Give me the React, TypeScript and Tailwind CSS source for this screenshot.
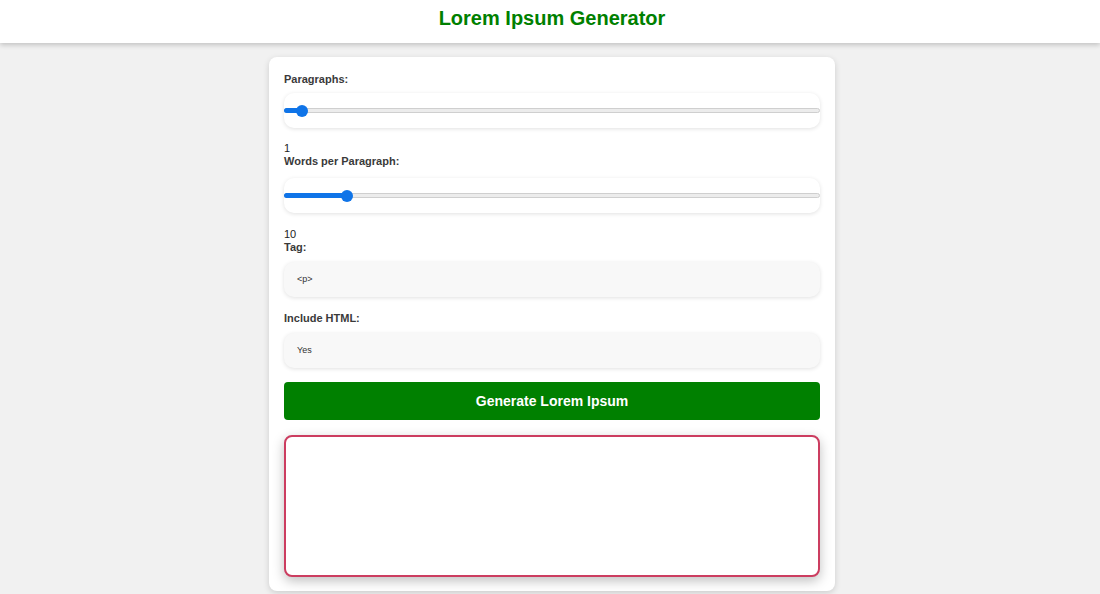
import { useState } from "react";

function Slider({ value, min, max }: { value: number; min: number; max: number }) {
  const pct = ((value - min) / (max - min)) * 100;
  return (
    <div className="relative flex h-[35px] w-full items-center rounded-[10px] bg-white shadow-[0_1px_4px_rgba(0,0,0,0.12)]">
      <div className="relative h-[5px] w-full">
        <div className="absolute inset-x-0 top-0 h-[5px] rounded-full border border-[#cfcfcf] bg-[#ececec]" />
        <div className="absolute left-0 top-0 h-[5px] rounded-full bg-[#0f74e8]" style={{ width: `${pct}%` }} />
        <div
          className="absolute top-1/2 h-[12px] w-[12px] -translate-x-1/2 -translate-y-1/2 rounded-full bg-[#0f74e8]"
          style={{ left: `${pct}%` }}
        />
      </div>
    </div>
  );
}

function Label({ children }: { children: string }) {
  return <div className="text-[11px] font-bold leading-[14px] text-[#3a3a3a]">{children}</div>;
}

function SelectBox({ value }: { value: string }) {
  return (
    <div className="flex h-[35px] w-full items-center rounded-[10px] bg-[#f8f8f8] px-[13px] text-[9px] text-[#333] shadow-[0_1px_4px_rgba(0,0,0,0.12)]">
      {value}
    </div>
  );
}

export default function App() {
  const [paragraphs] = useState(1);
  const [words] = useState(10);

  return (
    <div className="min-h-[594px] bg-[#f1f1f1] font-['Liberation_Sans',Arial,sans-serif]">
      <header className="h-[43px] bg-white pl-[4px] pt-[6px] text-center shadow-[0_2px_5px_rgba(0,0,0,0.2)]">
        <h1 className="text-[20px] font-bold leading-[24px] text-[#008000]">Lorem Ipsum Generator</h1>
      </header>

      <div className="pl-[4px]">
        <div className="mx-auto mt-[14px] w-[566px] rounded-[8px] bg-white px-[15px] pb-[14px] pt-[15px] shadow-[0_2px_6px_rgba(0,0,0,0.15)]">
          <Label>Paragraphs:</Label>
          <div className="mt-[7px]">
            <Slider value={paragraphs} min={0} max={30} />
          </div>

          <div className="mt-[14px] text-[11px] leading-[12px] text-[#222]">{paragraphs}</div>
          <Label>Words per Paragraph:</Label>
          <div className="mt-[10px]">
            <Slider value={words} min={0} max={85} />
          </div>

          <div className="mt-[15px] text-[11px] leading-[12px] text-[#222]">{words}</div>
          <Label>Tag:</Label>
          <div className="mt-[8px]">
            <SelectBox value="<p>" />
          </div>

          <div className="mt-[14px]">
            <Label>Include HTML:</Label>
          </div>
          <div className="mt-[8px]">
            <SelectBox value="Yes" />
          </div>

          <button className="mt-[14px] flex h-[38px] w-full items-center justify-center rounded-[4px] bg-[#008000] text-[14px] font-bold text-white">
            Generate Lorem Ipsum
          </button>

          <textarea
            readOnly
            className="mt-[15px] block h-[142px] w-full resize-none rounded-[8px] border-2 border-[#cc3d60] bg-white shadow-[0_4px_12px_rgba(0,0,0,0.25)] outline-none"
          />
        </div>
      </div>
    </div>
  );
}
